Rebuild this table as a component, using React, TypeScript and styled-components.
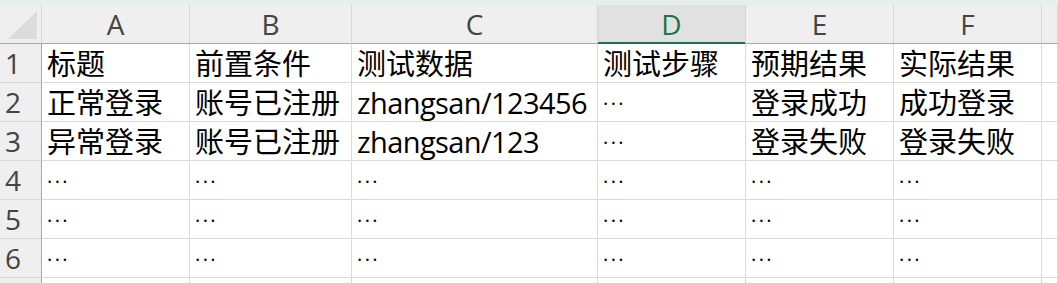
import styled, { createGlobalStyle } from "styled-components";

const GlobalStyle = createGlobalStyle`
	html, body {
		margin: 0;
		padding: 0;
		background: #ffffff;
		overflow: hidden;
	}
`;

const columns = ["A", "B", "C", "D", "E", "F"];
const selectedColumn = "D";

const rows: string[][] = [
	["标题", "前置条件", "测试数据", "测试步骤", "预期结果", "实际结果"],
	["正常登录", "账号已注册", "zhangsan/123456", "…", "登录成功", "成功登录"],
	["异常登录", "账号已注册", "zhangsan/123", "…", "登录失败", "登录失败"],
	["…", "…", "…", "…", "…", "…"],
	["…", "…", "…", "…", "…", "…"],
	["…", "…", "…", "…", "…", "…"],
];

const Sheet = styled.div`
	display: grid;
	grid-template-columns: 42px 148px 162px 246px 148px 148px 148px 1fr;
	grid-template-rows: 5px repeat(8, 39px);
	width: 1058px;
	height: 283px;
	overflow: hidden;
	font-family: "Open Sans", "Noto Sans CJK SC", sans-serif;
	color: #000000;
`;

const TopStrip = styled.div`
	grid-column: 1 / -1;
	background: #e8edf0;
`;

const Corner = styled.div`
	display: flex;
	align-items: flex-end;
	justify-content: flex-end;
	padding: 0 4px 4px 0;
	background: #efefef;
	border-right: 1px solid #d6d6d6;
	border-bottom: 1px solid #a8a8a8;
`;

const CornerTriangle = styled.span`
	width: 29px;
	height: 28px;
	background: #dcdcdc;
	clip-path: polygon(100% 0, 100% 100%, 0 100%);
`;

const ColumnHeader = styled.div<{ $selected?: boolean }>`
	display: flex;
	align-items: center;
	justify-content: center;
	font-size: 28px;
	line-height: 38px;
	color: ${(props) => (props.$selected ? "#217346" : "#444444")};
	background: ${(props) => (props.$selected ? "#e1e1e1" : "#efefef")};
	border-right: 1px solid #d6d6d6;
	border-bottom: 1px solid ${(props) => (props.$selected ? "#217346" : "#a8a8a8")};
	box-shadow: ${(props) => (props.$selected ? "inset 0 -1px 0 #217346" : "none")};
`;

const RowHeader = styled.div`
	padding-left: 5px;
	font-size: 28px;
	line-height: 38px;
	color: #444444;
	background: #efefef;
	border-right: 1px solid #a8a8a8;
	border-bottom: 1px solid #d6d6d6;
`;

const Cell = styled.div<{ $latin?: boolean }>`
	padding: 1px 0 0 5px;
	font-size: 29px;
	line-height: 38px;
	letter-spacing: ${(props) => (props.$latin ? "-0.6px" : "0")};
	white-space: nowrap;
	overflow: hidden;
	border-right: 1px solid #dadada;
	border-bottom: 1px solid #dadada;
`;

const Ellipsis = styled.span`
	font-family: "Open Sans", sans-serif;
	font-size: 20px;
	letter-spacing: 2.4px;
	position: relative;
	top: -3px;
`;

function CellContent({ value }: { value: string }): JSX.Element {
	if (value === "…") return <Ellipsis>···</Ellipsis>;
	return <>{value}</>;
}

export default function App(): JSX.Element {
	return (
		<>
			<GlobalStyle />
			<Sheet>
				<TopStrip />

				<Corner>
					<CornerTriangle />
				</Corner>
				{columns.map((column) =>
					<ColumnHeader key={column} $selected={column === selectedColumn}>{column}</ColumnHeader>)
				}
				<ColumnHeader />

				{rows.map((row, rowIndex) =>
					[
						<RowHeader key={`h${rowIndex}`}>{rowIndex + 1}</RowHeader>,
						...row.map((value, index) =>
							<Cell key={`${rowIndex}-${index}`} $latin={/^[\x00-\x7f]+$/.test(value)}>
								<CellContent value={value} />
							</Cell>),
						<Cell key={`${rowIndex}-g`} />,
					]
				)}

				{/* row 7 is only just peeking in at the bottom edge */}
				<RowHeader />
				{columns.map((column) => <Cell key={`7-${column}`} />)}
				<Cell />
			</Sheet>
		</>
	);
}
